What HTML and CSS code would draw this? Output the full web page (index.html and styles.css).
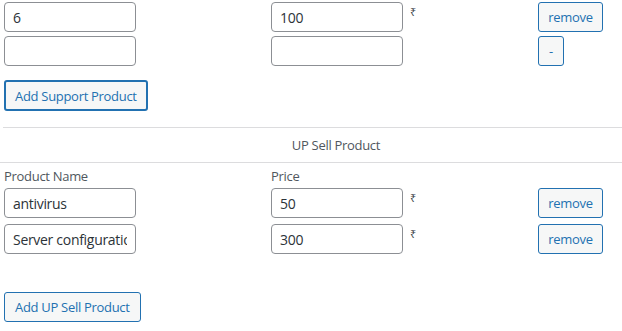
FILE: index.html
```html
<!DOCTYPE html>
<html lang="en">
<head>
<meta charset="utf-8">
<title>Products</title>
<link rel="stylesheet" href="styles.css">
</head>
<body>
<div class="page">
  <div class="rows rows-support">
    <div class="row">
      <div class="cell"><input class="field" type="text" value="6"></div>
      <div class="cell"><input class="field" type="text" value="100"><span class="cur">₹</span></div>
      <div class="cell"><button class="button btn-remove" type="button">remove</button></div>
    </div>
    <div class="row">
      <div class="cell"><input class="field" type="text" value=""></div>
      <div class="cell"><input class="field" type="text" value=""></div>
      <div class="cell"><button class="button btn-minus" type="button">-</button></div>
    </div>
  </div>
  <div class="add add-support">
    <button class="button button-focus" type="button">Add Support Product</button>
  </div>

  <div class="section-title">UP Sell Product</div>

  <div class="row labels">
    <div class="cell label">Product Name</div>
    <div class="cell label">Price</div>
  </div>
  <div class="rows rows-upsell">
    <div class="row">
      <div class="cell"><input class="field" type="text" value="antivirus"></div>
      <div class="cell"><input class="field" type="text" value="50"><span class="cur">₹</span></div>
      <div class="cell"><button class="button btn-remove" type="button">remove</button></div>
    </div>
    <div class="row">
      <div class="cell"><input class="field" type="text" value="Server configuration"></div>
      <div class="cell"><input class="field" type="text" value="300"><span class="cur">₹</span></div>
      <div class="cell"><button class="button btn-remove" type="button">remove</button></div>
    </div>
  </div>
  <div class="add add-upsell">
    <button class="button" type="button">Add UP Sell Product</button>
  </div>
</div>
</body>
</html>
```

FILE: styles.css
```css
html, body {
  margin: 0;
  padding: 0;
  background: #ffffff;
}

body {
  font-family: "Open Sans", "Noto Sans", "Liberation Sans", sans-serif;
  font-size: 13px;
  color: #3c434a;
  letter-spacing: -0.3px;
}

.page {
  padding-top: 2px;
}

.rows {
  display: flex;
  flex-direction: column;
  padding-left: 4px;
}

.rows-support {
  gap: 4px;
}

.rows-upsell {
  gap: 6px;
}

.row {
  display: grid;
  grid-template-columns: 267px 267px auto;
  align-items: start;
}

.cell {
  display: flex;
  align-items: flex-start;
}

.field {
  box-sizing: border-box;
  width: 132px;
  height: 30px;
  margin: 0;
  padding: 0 8px;
  border: 1px solid #8c8f94;
  border-radius: 4px;
  background: #fff;
  font-family: "Open Sans", "Noto Sans", sans-serif;
  font-size: 14px;
  letter-spacing: -0.3px;
  color: #2c3338;
  outline: none;
}

.cur {
  margin-left: 7px;
  margin-top: 3px;
  font-size: 11px;
  line-height: 14px;
  color: #3c434a;
}

.button {
  box-sizing: border-box;
  height: 30px;
  margin: 0;
  padding: 0 10px;
  border: 1px solid #2271b1;
  border-radius: 3px;
  background: #f6f7f7;
  color: #2271b1;
  font-family: "Open Sans", "Noto Sans", sans-serif;
  font-size: 13px;
  letter-spacing: -0.3px;
  line-height: 28px;
  white-space: nowrap;
  cursor: pointer;
}

.btn-remove {
  width: 65px;
  padding: 0;
}

.btn-minus {
  width: 26px;
  padding: 0;
}

.button-focus {
  border-width: 2px;
  border-color: #2271b1;
  height: 31px;
  padding: 0 9px;
}

.add {
  padding-left: 4px;
}

.add-support {
  margin-top: 14px;
  padding-bottom: 16px;
  border-bottom: 1px solid #dcdcde;
  margin-left: 3px;
  padding-left: 1px;
}

.section-title {
  height: 34px;
  line-height: 34px;
  padding-left: 50px;
  text-align: center;
  border-bottom: 1px solid #dcdcde;
  color: #50575e;
}

.labels {
  padding-left: 4px;
  margin-top: 4px;
  margin-bottom: 3px;
}

.label {
  line-height: 18px;
  color: #50575e;
}

.add-upsell {
  margin-top: 38px;
}
```
